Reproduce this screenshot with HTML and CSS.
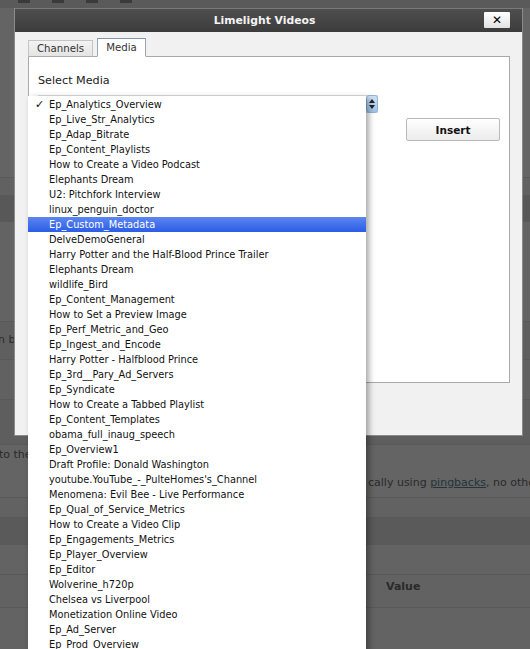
FILE: index.html
```html
<!DOCTYPE html>
<html>
<head>
<meta charset="utf-8">
<link rel="stylesheet" href="styles.css">
</head>
<body>
<div class="page">
  <div class="toolbar">
    <span class="tb-icon i1"></span><span class="tb-icon i2"></span><span class="tb-icon i3"></span><span class="tb-icon i4"></span>
  </div>
  <div class="band b1"></div>
  <div class="band b2"></div>
  <div class="band b3"></div>
  <div class="band b4"></div>
  <div class="band b5"><span class="bgtext t-nb">n b</span></div>
  <div class="band b6"></div>
  <div class="band b7"></div>
  <div class="band b8"><span class="bgtext t-tothe">to the</span><span class="bgtext t-cally">cally using <u>pingbacks</u>, no othe</span></div>
  <div class="band b9"></div>
  <div class="band b10"></div>
  <div class="band b11"></div>
  <div class="band b12"><span class="bgtext t-value">Value</span></div>
  <div class="band b13"></div>
</div>

<div class="dialog">
  <div class="titlebar">
    <span class="title">Limelight Videos</span>
    <span class="close">✕</span>
  </div>
  <div class="body">
    <div class="tabs">
      <span class="tab">Channels</span>
      <span class="tab active">Media</span>
    </div>
    <div class="panel">
      <div class="label">Select Media</div>
      <div class="row">
        <div class="select"><span class="arrows"><svg width="6" height="10" viewBox="0 0 6 10"><path d="M0 4 L3 0 L6 4 Z M0 6 L3 10 L6 6 Z" fill="#222"/></svg></span></div>
        <button class="insert">Insert</button>
      </div>
    </div>
  </div>
</div>

<ul class="menu">
  <li class="checked">Ep_Analytics_Overview</li>
  <li>Ep_Live_Str_Analytics</li>
  <li>Ep_Adap_Bitrate</li>
  <li>Ep_Content_Playlists</li>
  <li>How to Create a Video Podcast</li>
  <li>Elephants Dream</li>
  <li>U2: Pitchfork Interview</li>
  <li>linux_penguin_doctor</li>
  <li class="hl">Ep_Custom_Metadata</li>
  <li>DelveDemoGeneral</li>
  <li>Harry Potter and the Half-Blood Prince Trailer</li>
  <li>Elephants Dream</li>
  <li>wildlife_Bird</li>
  <li>Ep_Content_Management</li>
  <li>How to Set a Preview Image</li>
  <li>Ep_Perf_Metric_and_Geo</li>
  <li>Ep_Ingest_and_Encode</li>
  <li>Harry Potter - Halfblood Prince</li>
  <li>Ep_3rd__Pary_Ad_Servers</li>
  <li>Ep_Syndicate</li>
  <li>How to Create a Tabbed Playlist</li>
  <li>Ep_Content_Templates</li>
  <li>obama_full_inaug_speech</li>
  <li>Ep_Overview1</li>
  <li>Draft Profile: Donald Washington</li>
  <li>youtube.YouTube_-_PulteHomes's_Channel</li>
  <li>Menomena: Evil Bee - Live Performance</li>
  <li>Ep_Qual_of_Service_Metrics</li>
  <li>How to Create a Video Clip</li>
  <li>Ep_Engagements_Metrics</li>
  <li>Ep_Player_Overview</li>
  <li>Ep_Editor</li>
  <li>Wolverine_h720p</li>
  <li>Chelsea vs Liverpool</li>
  <li>Monetization Online Video</li>
  <li>Ep_Ad_Server</li>
  <li>Ep_Prod_Overview</li>
</ul>
</body>
</html>
```

FILE: styles.css
```css
html, body {
  margin: 0;
  padding: 0;
}
body {
  width: 530px;
  height: 649px;
  overflow: hidden;
  background: #636363;
  font-family: "DejaVu Sans", sans-serif;
  position: relative;
}
.page {
  display: flex;
  flex-direction: column;
}
.toolbar {
  height: 8px;
  background: #5a5a5a;
  display: flex;
  gap: 22px;
  padding-left: 18px;
  align-items: flex-start;
}
.tb-icon {
  width: 12px;
  height: 3px;
  background: #3a3a3a;
}
.band {
  position: relative;
  border-bottom: 1px solid #595959;
  flex: none;
}
.b1 { height: 169px; background: #646464; }
.b2 { height: 17px; background: #616161; }
.b3 { height: 25px; background: #585858; }
.b4 { height: 99px; background: #636363; }
.b5 { height: 37px; background: #5f5f5f; }
.b6 { height: 39px; background: #616161; }
.b7 { height: 44px; background: #5e5e5e; }
.b8 { height: 52px; background: #646464; }
.b9 { height: 19px; background: #626262; }
.b10 { height: 26px; background: #5a5a5a; }
.b11 { height: 29px; background: #636363; }
.b12 { height: 32px; background: #626262; }
.b13 { height: 41px; background: #636363; border-bottom: none; }
.bgtext {
  position: absolute;
  font-size: 11px;
  line-height: 13px;
  color: #2a2a2a;
  white-space: nowrap;
}
.t-nb { left: -2px; top: 11px; }
.t-tothe { left: -1px; top: 3px; }
.t-cally { left: 368px; top: 31px; }
.t-cally u { color: #23343c; }
.t-value { left: 386px; top: 5px; font-weight: bold; }

/* dialog */
.dialog {
  position: absolute;
  left: 14px;
  top: 8px;
  width: 509px;
  height: 428px;
  background: #f1f1f1;
  border: 1px solid #8a8a8a;
  border-top: none;
  box-sizing: border-box;
  display: flex;
  flex-direction: column;
}
.titlebar {
  height: 23px;
  background: linear-gradient(#4e4e4e, #3c3c3c);
  border-top: 1px solid #7a7a7a;
  display: flex;
  align-items: center;
  justify-content: center;
  position: relative;
}
.title {
  color: #f4f4f4;
  font-weight: bold;
  font-size: 10.8px;
  margin-right: 8px;
}
.close {
  position: absolute;
  right: 12px;
  top: 3px;
  width: 26px;
  height: 16px;
  background: linear-gradient(#ffffff, #e2e2e2);
  border-radius: 1px;
  font-size: 12px;
  font-weight: bold;
  color: #000;
  display: flex;
  align-items: center;
  justify-content: center;
}
.body {
  flex: 1;
  padding: 7px 12px 0 13px;
  display: flex;
  flex-direction: column;
}
.tabs {
  display: flex;
  gap: 4px;
  height: 18px;
  align-items: flex-end;
  position: relative;
  z-index: 1;
  margin-bottom: -1px;
}
.tab {
  font-size: 10.2px;
  color: #333;
  height: 17px;
  box-sizing: border-box;
  padding: 1px 8px 0 8px;
  border: 1px solid #c4c4c4;
  border-bottom: 1px solid #aaa;
  background: linear-gradient(#f3f3f3, #e4e4e4);
  line-height: 14px;
}
.tab.active {
  height: 19px;
  background: #fff;
  border-color: #9aa7b3;
  border-top: 1px solid #7f97ad;
  border-bottom-color: #fff;
  padding: 1px 8px 0 8px;
  line-height: 16px;
}
.panel {
  height: 327px;
  background: #fff;
  border: 1px solid #a9a9a9;
  box-sizing: border-box;
  padding: 17px 0 0 9px;
}
.label {
  font-size: 11.2px;
  color: #222;
  margin-bottom: 8px;
}
.row {
  display: flex;
  align-items: flex-start;
}
.select {
  width: 340px;
  height: 18px;
  background: #fff;
  border: 1px solid #ddd;
  box-sizing: border-box;
  position: relative;
}
.arrows {
  position: absolute;
  right: -1px;
  top: -1px;
  width: 12px;
  height: 18px;
  background: linear-gradient(#cfe3f7, #9ec3ea);
  border: 1px solid #8fb2d8;
  box-sizing: border-box;
  border-radius: 3px;
  display: flex;
  align-items: center;
  justify-content: center;
}
.insert {
  margin-left: 28px;
  margin-top: 23px;
  width: 94px;
  height: 23px;
  font-family: "DejaVu Sans", sans-serif;
  font-size: 10.5px;
  font-weight: bold;
  color: #111;
  background: linear-gradient(#ffffff, #ebebeb);
  border: 1px solid #b9b9b9;
  border-radius: 2px;
  padding: 0;
}

/* dropdown menu */
.menu {
  position: absolute;
  left: 28px;
  top: 96px;
  width: 338px;
  margin: 0;
  padding: 1px 0 0 0;
  list-style: none;
  background: #fff;
  box-shadow: 3px 2px 6px rgba(0,0,0,0.35);
  z-index: 5;
}
.menu li {
  height: 15px;
  line-height: 15px;
  font-size: 9.8px;
  color: #111;
  padding-left: 21px;
  white-space: nowrap;
  position: relative;
}
.menu li.checked::before {
  content: "✓";
  position: absolute;
  left: 7px;
  top: 0;
  font-size: 11px;
}
.menu li.hl {
  background: linear-gradient(#5d86f0, #2b5de6);
  color: #fff;
}
```
